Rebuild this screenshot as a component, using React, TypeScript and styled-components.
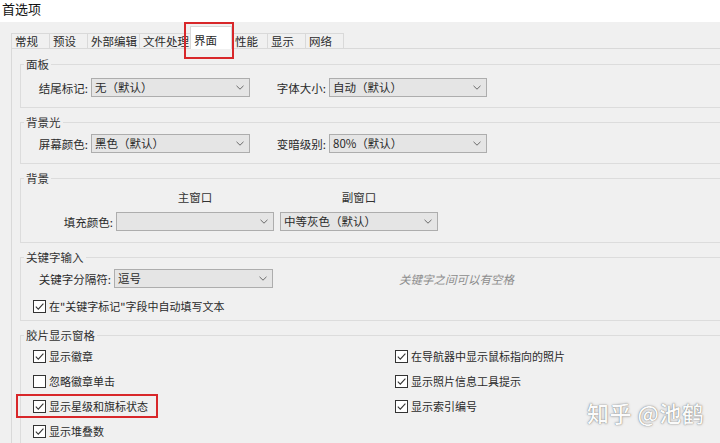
import React from "react";
import styled, { createGlobalStyle } from "styled-components";

const Global = createGlobalStyle`
  html, body { margin: 0; padding: 0; background: #ffffff; }
  body {
    font-family: "Noto Sans CJK SC", "Noto Sans", sans-serif;
    color: #2a2a2a;
  }
  #root { width: 720px; height: 443px; }
`;

const Window = styled.div`
  position: relative;
  width: 720px;
  height: 443px;
  overflow: hidden;
  display: flex;
  flex-direction: column;
  background: #f0f0f0;
`;

const TitleBar = styled.div`
  flex: none;
  box-sizing: border-box;
  height: 22px;
  background: #ffffff;
  font-size: 13px;
  line-height: 16px;
  padding: 1px 0 0 2px;
  color: #111;
`;

const Body = styled.div`
  flex: 1;
  display: flex;
  flex-direction: column;
  padding: 4px 0 0 11px;
`;

const TabStrip = styled.div`
  flex: none;
  height: 22px;
  display: flex;
  align-items: flex-end;
`;

const Tab = styled.div<{ $w: number; $active?: boolean }>`
  box-sizing: border-box;
  width: ${(p) => p.$w}px;
  height: ${(p) => (p.$active ? 23 : 15)}px;
  margin-right: -1px;
  margin-bottom: ${(p) => (p.$active ? -1 : 0)}px;
  border: 1px solid #d9d9d9;
  border-bottom: none;
  background: ${(p) => (p.$active ? "#ffffff" : "#f0f0f0")};
  position: relative;
  z-index: ${(p) => (p.$active ? 2 : 1)};
  font-size: 11.5px;
  line-height: 14px;
  padding: ${(p) => (p.$active ? "6px 0 0 3px" : "0 0 0 3px")};
  color: #2a2a2a;
  white-space: nowrap;
`;

const Pane = styled.div`
  flex: 1;
  width: 780px;
  border-top: 1px solid #d9d9d9;
  border-left: 1px solid #d9d9d9;
  padding: 8px 0 0 8px;
  display: flex;
  flex-direction: column;
  gap: 7px;
`;

const Group = styled.fieldset<{ $pt: number; $pb: number }>`
  margin: 0;
  min-width: 0;
  border: 1px solid #dcdcdc;
  padding: ${(p) => p.$pt}px 0 ${(p) => p.$pb}px 0;
  display: flex;
  flex-direction: column;
`;

const Legend = styled.legend`
  margin-left: 3px;
  padding: 0 2px;
  font-size: 11.5px;
  line-height: 14px;
  color: #333;
`;

const FieldRow = styled.div`
  display: flex;
  align-items: center;
  height: 19px;
`;

const Label = styled.span<{ $w: number }>`
  flex: none;
  width: ${(p) => p.$w}px;
  text-align: right;
  font-size: 11.5px;
  line-height: 16px;
  color: #2a2a2a;
  white-space: nowrap;
`;

const Combo = styled.div<{ $w: number; $gap?: number }>`
  flex: none;
  box-sizing: border-box;
  width: ${(p) => p.$w}px;
  height: 19px;
  margin-left: ${(p) => p.$gap ?? 3}px;
  border: 1px solid #adadad;
  background: #e5e5e5;
  display: flex;
  align-items: center;
  justify-content: space-between;
  padding: 0 5px 0 3px;
  font-size: 11.5px;
  line-height: 17px;
  color: #2a2a2a;
  white-space: nowrap;
`;

const HeaderRow = styled.div`
  display: flex;
  padding-left: 95px;
  gap: 6px;
  margin-bottom: 7px;
`;

const ColumnHead = styled.div`
  width: 158px;
  text-align: center;
  font-size: 11.5px;
  line-height: 16px;
  color: #333;
`;

const Hint = styled.span`
  margin-left: 126px;
  font-size: 11.5px;
  line-height: 16px;
  font-style: italic;
  color: #8c8c8c;
  white-space: nowrap;
`;

const CheckRow = styled.label`
  display: flex;
  align-items: center;
  height: 16px;
  gap: 3px;
  font-size: 11px;
  line-height: 16px;
  color: #2a2a2a;
  white-space: nowrap;
`;

const KeywordCheck = styled(CheckRow)`
  margin: 10px 0 0 12px;
`;

const Box = styled.span`
  box-sizing: border-box;
  flex: none;
  width: 13px;
  height: 13px;
  border: 1px solid #333;
  background: #ffffff;
  display: flex;
  align-items: center;
  justify-content: center;
`;

const CheckGrid = styled.div`
  display: grid;
  grid-template-columns: 362px 1fr;
  row-gap: 9px;
  padding-left: 12px;
`;

const Annotation = styled.div<{ $x: number; $y: number; $w: number; $h: number }>`
  position: absolute;
  left: ${(p) => p.$x}px;
  top: ${(p) => p.$y}px;
  width: ${(p) => p.$w}px;
  height: ${(p) => p.$h}px;
  box-sizing: border-box;
  border: 2px solid #d8272a;
  z-index: 5;
  pointer-events: none;
`;

const Watermark = styled.div`
  position: absolute;
  left: 587px;
  top: 398px;
  font-size: 22px;
  line-height: 28px;
  font-weight: 500;
  color: #fbfbfb;
  letter-spacing: 0.5px;
  text-shadow: 0 0 1px rgba(0, 0, 0, 0.55), 0 0 3px rgba(0, 0, 0, 0.25);
  z-index: 6;
  white-space: nowrap;
`;

const Chevron = () => (
  <svg width="8" height="5" viewBox="0 0 8 5">
    <path d="M0.5 0.8 L4 4.2 L7.5 0.8" fill="none" stroke="#6a6a6a" strokeWidth="1" />
  </svg>
);

const Tick = () => (
  <svg width="11" height="11" viewBox="0 0 11 11">
    <path d="M1.8 5.6 L4.3 8.1 L9.4 2.6" fill="none" stroke="#333" strokeWidth="1.1" />
  </svg>
);

const Check: React.FC<{ checked?: boolean; children: React.ReactNode }> = ({ checked = true, children }) => (
  <CheckRow>
    <Box>{checked && <Tick />}</Box>
    {children}
  </CheckRow>
);

const Select: React.FC<{ w: number; gap?: number; value?: string }> = ({ w, gap, value = "" }) => (
  <Combo $w={w} $gap={gap}>
    <span>{value}</span>
    <Chevron />
  </Combo>
);

const tabs: { label: string; w: number; active?: boolean }[] = [
  { label: "常规", w: 39 },
  { label: "预设", w: 39 },
  { label: "外部编辑", w: 53 },
  { label: "文件处理", w: 52 },
  { label: "界面", w: 42, active: true },
  { label: "性能", w: 37 },
  { label: "显示", w: 39 },
  { label: "网络", w: 39 },
];

export default function App() {
  return (
    <>
      <Global />
      <Window>
        <TitleBar>首选项</TitleBar>
        <Body>
          <TabStrip>
            {tabs.map((t) => (
              <Tab key={t.label} $w={t.w} $active={t.active}>
                {t.label}
              </Tab>
            ))}
          </TabStrip>
          <Pane>
            <Group $pt={7} $pb={10}>
              <Legend>面板</Legend>
              <FieldRow>
                <Label $w={67}>结尾标记:</Label>
                <Select w={159} value="无（默认）" />
                <Label $w={76}>字体大小:</Label>
                <Select w={158} value="自动（默认）" />
              </FieldRow>
            </Group>

            <Group $pt={5} $pb={10}>
              <Legend>背景光</Legend>
              <FieldRow>
                <Label $w={67}>屏幕颜色:</Label>
                <Select w={159} value="黑色（默认）" />
                <Label $w={76}>变暗级别:</Label>
                <Select w={158} value="80%（默认）" />
              </FieldRow>
            </Group>

            <Group $pt={4} $pb={11}>
              <Legend>背景</Legend>
              <HeaderRow>
                <ColumnHead>主窗口</ColumnHead>
                <ColumnHead>副窗口</ColumnHead>
              </HeaderRow>
              <FieldRow>
                <Label $w={92}>填充颜色:</Label>
                <Select w={158} />
                <Select w={158} gap={6} value="中等灰色（默认）" />
              </FieldRow>
            </Group>

            <Group $pt={5} $pb={6}>
              <Legend>关键字输入</Legend>
              <FieldRow>
                <Label $w={90}>关键字分隔符:</Label>
                <Select w={159} value="逗号" />
                <Hint>关键字之间可以有空格</Hint>
              </FieldRow>
              <KeywordCheck>
                <Box>
                  <Tick />
                </Box>
                在"关键字标记"字段中自动填写文本
              </KeywordCheck>
            </Group>

            <Group $pt={6} $pb={20}>
              <Legend>胶片显示窗格</Legend>
              <CheckGrid>
                <Check>显示徽章</Check>
                <Check>在导航器中显示鼠标指向的照片</Check>
                <Check checked={false}>忽略徽章单击</Check>
                <Check>显示照片信息工具提示</Check>
                <Check>显示星级和旗标状态</Check>
                <Check>显示索引编号</Check>
                <Check>显示堆叠数</Check>
              </CheckGrid>
            </Group>
          </Pane>
        </Body>
        <Annotation $x={184} $y={22} $w={50} $h={37} />
        <Annotation $x={16} $y={394} $w={142} $h={24} />
        <Watermark>知乎 @池鹤</Watermark>
      </Window>
    </>
  );
}
